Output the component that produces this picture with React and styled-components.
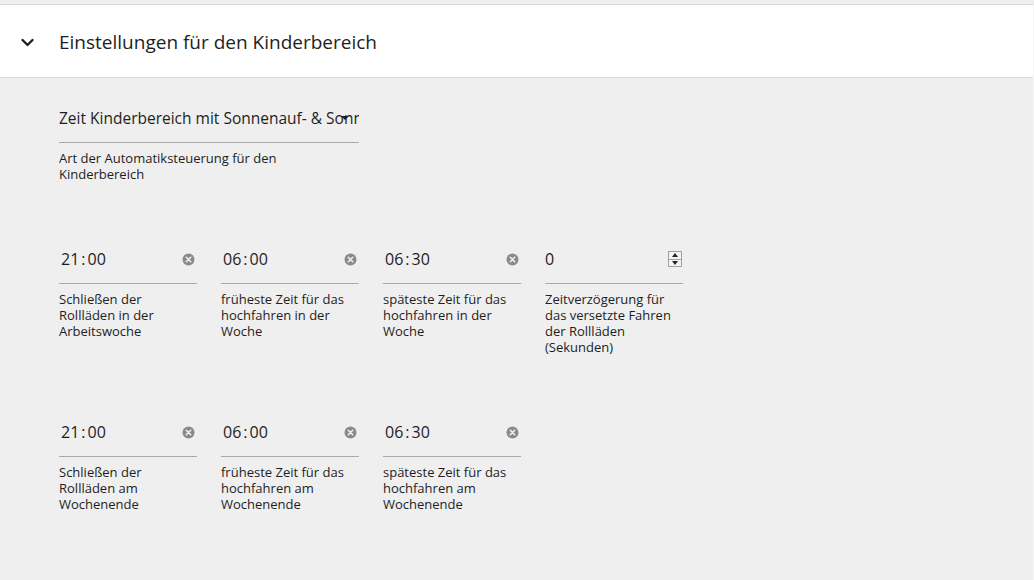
import React from "react";
import styled, { createGlobalStyle } from "styled-components";

const Global = createGlobalStyle`
  html, body { margin: 0; padding: 0; background: #efefef; }
  body { font-family: "Open Sans", "Noto Sans", sans-serif; color: #1e1e1e; }
  * { box-sizing: border-box; }
`;

const Page = styled.div`
  width: 1034px;
  height: 580px;
  overflow: hidden;
  padding-top: 4px;
  background: #efefef;
`;

const Panel = styled.section`
  border-top: 1px solid #dcdcdc;
  border-right: 1px solid #f6f6f6;
  height: 100%;
`;

const Header = styled.div`
  height: 73px;
  background: #fff;
  border-bottom: 1px solid #dadada;
  display: flex;
  align-items: center;
  padding-left: 20px;
  padding-top: 2px;
  gap: 24px;
`;

const Title = styled.h2`
  margin: 0;
  font-size: 19px;
  font-weight: 400;
  color: #1e1e1e;
`;

const Body = styled.div`
  padding: 28px 59px 0;
  display: flex;
  flex-direction: column;
  gap: 65px;
`;

const Row = styled.div`
  display: flex;
  gap: 24px;
  align-items: flex-start;
`;

const Field = styled.div`
  width: ${(p) => p.$w || 138}px;
`;

const Control = styled.div`
  position: relative;
  height: 37px;
  border-bottom: 1px solid #a9a9a9;
  display: flex;
  align-items: flex-start;
  padding-top: 2px;
  padding-left: ${(p) => p.$pl ?? 2}px;
  font-size: ${(p) => p.$fs || 16}px;
  line-height: 20px;
  color: #1e1e1e;
  overflow: hidden;
  white-space: nowrap;
`;

const Value = styled.span`
  flex: 1;
  overflow: hidden;
`;

const Colon = styled.span`
  margin: 0 2px;
`;

const Label = styled.div`
  margin-top: 7px;
  font-size: 13px;
  line-height: 16px;
  color: #1e1e1e;
  width: ${(p) => p.$w || 134}px;
`;

const ClearBtn = styled.span`
  position: absolute;
  right: 2px;
  top: 6px;
  display: flex;
`;

const Spin = styled.span`
  position: absolute;
  right: 1px;
  top: 4px;
  width: 14px;
  height: 16px;
  border: 1px solid #a0a0a0;
  background: #f4f4f4;
  display: flex;
  flex-direction: column;
`;

const SpinHalf = styled.span`
  flex: 1;
  display: flex;
  align-items: center;
  justify-content: center;
  & + & { border-top: 1px solid #a0a0a0; }
`;

const SelectArrow = styled.span`
  position: absolute;
  right: 10px;
  top: 10px;
  width: 0;
  height: 0;
  border-left: 4px solid transparent;
  border-right: 4px solid transparent;
  border-top: 4px solid #1e1e1e;
`;

const Chevron = () => (
  <svg width="15" height="15" viewBox="0 0 24 24">
    <path d="M4 8l8 8 8-8" fill="none" stroke="#1e1e1e" strokeWidth="3.8" strokeLinecap="round" strokeLinejoin="round" />
  </svg>
);

const ClearIcon = () => (
  <svg width="13" height="13" viewBox="0 0 13 13">
    <circle cx="6.5" cy="6.5" r="6" fill="#8a8a8a" />
    <path d="M4.3 4.3l4.4 4.4M8.7 4.3l-4.4 4.4" stroke="#efefef" strokeWidth="1.6" strokeLinecap="round" />
  </svg>
);

const TimeField = ({ h, m, label }) => (
  <Field>
    <Control>
      <Value>
        {h}
        <Colon>:</Colon>
        {m}
      </Value>
      <ClearBtn>
        <ClearIcon />
      </ClearBtn>
    </Control>
    <Label>{label}</Label>
  </Field>
);

const Tri = ({ up }) => (
  <svg width="6" height="4" viewBox="0 0 6 4">
    <path d={up ? "M0 4h6L3 0z" : "M0 0h6L3 4z"} fill="#222" />
  </svg>
);

export default function App() {
  return (
    <Page>
      <Global />
      <Panel>
        <Header>
          <Chevron />
          <Title>Einstellungen für den Kinderbereich</Title>
        </Header>
        <Body>
          <Row>
            <Field $w={300}>
              <Control $pl={0} $fs={15.5}>
                <Value>Zeit Kinderbereich mit Sonnenauf- &amp; Sonnenuntergang</Value>
                <SelectArrow />
              </Control>
              <Label $w={240}>Art der Automatiksteuerung für den Kinderbereich</Label>
            </Field>
          </Row>
          <Row>
            <TimeField h="21" m="00" label="Schließen der Rollläden in der Arbeitswoche" />
            <TimeField h="06" m="00" label="früheste Zeit für das hochfahren in der Woche" />
            <TimeField h="06" m="30" label="späteste Zeit für das hochfahren in der Woche" />
            <Field>
              <Control $pl={0}>
                <Value>0</Value>
                <Spin>
                  <SpinHalf><Tri up /></SpinHalf>
                  <SpinHalf><Tri /></SpinHalf>
                </Spin>
              </Control>
              <Label>Zeitverzögerung für das versetzte Fahren der Rollläden (Sekunden)</Label>
            </Field>
          </Row>
          <Row>
            <TimeField h="21" m="00" label="Schließen der Rollläden am Wochenende" />
            <TimeField h="06" m="00" label="früheste Zeit für das hochfahren am Wochenende" />
            <TimeField h="06" m="30" label="späteste Zeit für das hochfahren am Wochenende" />
          </Row>
        </Body>
      </Panel>
    </Page>
  );
}
